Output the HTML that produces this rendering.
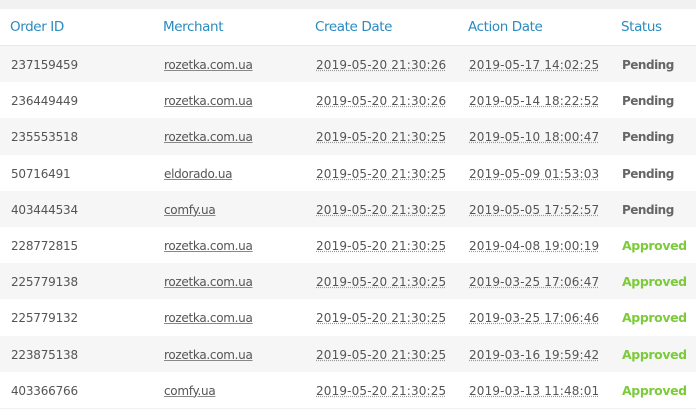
<!DOCTYPE html>
<html><head><meta charset="utf-8"><style>
html,body{margin:0;padding:0;width:696px;height:404px;overflow:hidden;background:#f1f1f1;font-family:"DejaVu Sans","Liberation Sans",sans-serif;}
.t{position:absolute;left:0;top:9px;width:696px;background:#fff;}
.r{position:relative;height:36.2px;}
.h{height:36px;border-bottom:1px solid #e8e8e8;}
.g{background:#f6f6f6;}
.c{position:absolute;top:1px;line-height:36px;font-size:12px;color:#555;white-space:nowrap;letter-spacing:-0.2px}
.h .c{color:#2a8bbf;font-size:13.5px;line-height:37px;top:0;letter-spacing:-0.4px}
.m{text-decoration:underline;text-decoration-color:#888;letter-spacing:-0.3px}
.d{text-decoration:underline dotted;text-decoration-color:#999;letter-spacing:0.15px}
.p{font-weight:bold;color:#666;font-size:12px;letter-spacing:-0.5px}
.a{font-weight:bold;color:#7ccb3a;font-size:12.5px;letter-spacing:-0.4px}
</style></head><body>
<div class="t">
<div class="r h"><span class="c" style="left:10px">Order ID</span><span class="c" style="left:163px">Merchant</span><span class="c" style="left:315px">Create Date</span><span class="c" style="left:468px">Action Date</span><span class="c" style="left:621px">Status</span></div>
<div class="r g"><span class="c" style="left:11px">237159459</span><span class="c m" style="left:164px">rozetka.com.ua</span><span class="c d" style="left:316px">2019-05-20 21:30:26</span><span class="c d" style="left:469px">2019-05-17 14:02:25</span><span class="c p" style="left:622px">Pending</span></div>
<div class="r"><span class="c" style="left:11px">236449449</span><span class="c m" style="left:164px">rozetka.com.ua</span><span class="c d" style="left:316px">2019-05-20 21:30:26</span><span class="c d" style="left:469px">2019-05-14 18:22:52</span><span class="c p" style="left:622px">Pending</span></div>
<div class="r g"><span class="c" style="left:11px">235553518</span><span class="c m" style="left:164px">rozetka.com.ua</span><span class="c d" style="left:316px">2019-05-20 21:30:25</span><span class="c d" style="left:469px">2019-05-10 18:00:47</span><span class="c p" style="left:622px">Pending</span></div>
<div class="r"><span class="c" style="left:11px">50716491</span><span class="c m" style="left:164px">eldorado.ua</span><span class="c d" style="left:316px">2019-05-20 21:30:25</span><span class="c d" style="left:469px">2019-05-09 01:53:03</span><span class="c p" style="left:622px">Pending</span></div>
<div class="r g"><span class="c" style="left:11px">403444534</span><span class="c m" style="left:164px">comfy.ua</span><span class="c d" style="left:316px">2019-05-20 21:30:25</span><span class="c d" style="left:469px">2019-05-05 17:52:57</span><span class="c p" style="left:622px">Pending</span></div>
<div class="r"><span class="c" style="left:11px">228772815</span><span class="c m" style="left:164px">rozetka.com.ua</span><span class="c d" style="left:316px">2019-05-20 21:30:25</span><span class="c d" style="left:469px">2019-04-08 19:00:19</span><span class="c a" style="left:622px">Approved</span></div>
<div class="r g"><span class="c" style="left:11px">225779138</span><span class="c m" style="left:164px">rozetka.com.ua</span><span class="c d" style="left:316px">2019-05-20 21:30:25</span><span class="c d" style="left:469px">2019-03-25 17:06:47</span><span class="c a" style="left:622px">Approved</span></div>
<div class="r"><span class="c" style="left:11px">225779132</span><span class="c m" style="left:164px">rozetka.com.ua</span><span class="c d" style="left:316px">2019-05-20 21:30:25</span><span class="c d" style="left:469px">2019-03-25 17:06:46</span><span class="c a" style="left:622px">Approved</span></div>
<div class="r g"><span class="c" style="left:11px">223875138</span><span class="c m" style="left:164px">rozetka.com.ua</span><span class="c d" style="left:316px">2019-05-20 21:30:25</span><span class="c d" style="left:469px">2019-03-16 19:59:42</span><span class="c a" style="left:622px">Approved</span></div>
<div class="r"><span class="c" style="left:11px">403366766</span><span class="c m" style="left:164px">comfy.ua</span><span class="c d" style="left:316px">2019-05-20 21:30:25</span><span class="c d" style="left:469px">2019-03-13 11:48:01</span><span class="c a" style="left:622px">Approved</span></div>
</div>
</body></html>
